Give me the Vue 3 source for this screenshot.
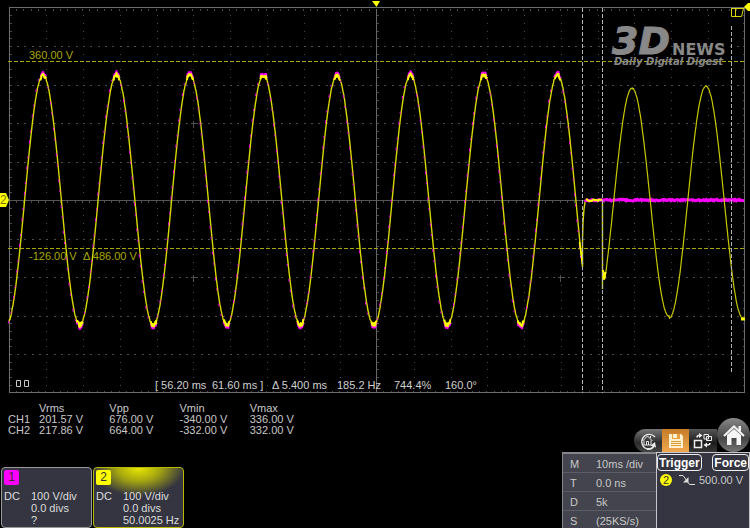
<script setup>
const LEFT = 9
const RIGHT = 744
const TOP = 8
const BOTTOM = 392
const MID_X = 376
const MID_Y = 200
const DIV_X = 36.75
const DIV_Y = 38.5
const PERIOD = 73.5

const range = (from, to) => Array.from({ length: to - from + 1 }, (_, i) => from + i)

// Graticule: dotted division lines, ticks on the frame and on both axes
const columns = range(-9, 9).filter((n) => n).map((n) => Math.round(MID_X + n * DIV_X))
const rows = range(-4, 4).filter((n) => n).map((n) => Math.round(MID_Y + n * DIV_Y))
const minorX = range(-49, 49).map((n) => Math.round(MID_X + (n * DIV_X) / 5))
const minorY = range(-24, 24).map((n) => Math.round(MID_Y + (n * DIV_Y) / 5))

const dots = [
  ...columns.map((x) => minorY.map((y) => `M${x} ${y}h1`).join('')),
  ...rows.map((y) => minorX.map((x) => `M${x} ${y}h2`).join('')),
].join('')
const ticks = [
  ...minorX.map((x) => `M${x} ${TOP}v2M${x} ${BOTTOM}v-2M${x} ${MID_Y - 1}v3`),
  ...minorY.map((y) => `M${LEFT} ${y}h2M${RIGHT} ${y}h-2M${MID_X - 1} ${y}h3`),
].join('')
const crosses = [193, 560]
  .flatMap((x) => [123, 277].map((y) => `M${x - 3} ${y}h7M${x} ${y - 3}v7`))
  .join('')

// Repeatable pseudo-random value in -1..1
const noise = (n) => {
  const v = Math.sin(n * 12.9898) * 43758.5453
  return (v - Math.floor(v)) * 2 - 1
}

const trace = (from, to, step, fn) => {
  let d = ''
  for (let x = from; x <= to; x += step) {
    d += `${d ? 'L' : 'M'}${x.toFixed(1)} ${fn(x).toFixed(1)}`
  }
  return d
}
const phase = (x, peak) => Math.cos(((x - peak) * 2 * Math.PI) / PERIOD)
const mains = (amp, jitter) => (x) => {
  const c = phase(x, 43)
  return MID_Y - amp * c + noise(x) * jitter * c * c
}
const inverter = (x) => 202 - (x > 669 ? 116 : 114) * phase(x, x > 669 ? 706 : 632) + noise(x) * 0.5

const crestsOf = (amp) =>
  range(0, 14)
    .map((n) => 43 + (n * PERIOD) / 2)
    .map((x) => trace(x - 3, x + 3, 0.5, mains(amp, 2)))
    .join('')

const yellowMain =
  trace(LEFT, 582.5, 0.5, mains(125, 1)) +
  'L582.5 240L583 222L584 209L585 202L587 200H602.5V289'
const yellowTail = 'M603 270L604 279' + trace(605, 743, 0.5, inverter).replace('M', 'L')
const magentaMain = trace(LEFT, 582, 0.5, mains(127, 1))
const yellowCrests = crestsOf(125)
const magentaCrests = crestsOf(127)
const magentaFlat = trace(585, 744, 1, (x) => MID_Y + noise(x) * 0.9)
const yellowFlat = trace(586, 602, 1, (x) => MID_Y + noise(x + 5) * 1.2)

const measureHeads = ['Vrms', 'Vpp', 'Vmin', 'Vmax']
const measures = [
  { name: 'CH1', values: ['201.57 V', '676.00 V', '-340.00 V', '336.00 V'] },
  { name: 'CH2', values: ['217.86 V', '664.00 V', '-332.00 V', '332.00 V'] },
]
const channels = [
  { id: 1, coupling: 'DC', lines: ['100 V/div', '0.0 divs', '?'] },
  { id: 2, coupling: 'DC', lines: ['100 V/div', '0.0 divs', '50.0025 Hz'] },
]
const timebase = [
  ['M', '10ms /div'],
  ['T', '0.0 ns'],
  ['D', '5k'],
  ['S', '(25KS/s)'],
]
</script>

<template>
  <main class="scope">
    <svg class="screen" viewBox="0 0 750 396" role="img" aria-label="Waveforms">
      <g shape-rendering="crispEdges" fill="none" transform="translate(0.5 0.5)">
        <path :d="dots" stroke="#4c4c4c" />
        <path :d="ticks" stroke="#4a4a4a" />
        <path :d="crosses" stroke="#505050" />
        <path d="M9 200H744" stroke="#555" />
        <path d="M376 8V392" stroke="#666" />
        <path d="M9 7H744V392H9Z" stroke="#6c6c6c" />
      </g>

      <g shape-rendering="crispEdges" fill="none" stroke="#a8a800" stroke-dasharray="4 2">
        <path d="M8 61.5H744" />
        <path d="M8 248.5H744" />
      </g>

      <g class="watermark">
        <text x="612" y="54" class="mark">3D</text>
        <text x="672" y="55" class="news">NEWS</text>
        <text x="614" y="65" class="motto">Daily Digital Digest</text>
      </g>

      <g fill="none" stroke-linejoin="round">
        <path :d="yellowMain" stroke="#d8d800" stroke-width="1.4" />
        <path :d="magentaMain" stroke="#f0f" stroke-dasharray="3 8 2 13" transform="translate(-0.8 0)" />
        <path :d="magentaCrests" stroke="#f0f" stroke-width="2" />
        <path :d="yellowCrests" stroke="#ff0" stroke-width="2" />
        <path d="M579.5 242L582.5 264" stroke="#ff0" stroke-width="1.5" />
        <path :d="magentaFlat" stroke="#f0f" stroke-width="3" />
        <path :d="yellowFlat" stroke="#ff0" stroke-width="2" />
        <path :d="yellowTail" stroke="#c8c800" stroke-width="1.2" />
        <path d="M603 270L604 279L605.5 272" stroke="#ff0" stroke-width="2" />
        <path d="M741 319h4" stroke="#ff0" stroke-width="3" />
      </g>
      <g shape-rendering="crispEdges" fill="none" stroke="#b4b4b4">
        <path d="M582.5 8V393M602.5 8V393" stroke-dasharray="4 2" />
        <path d="M731.5 26V374" stroke-dasharray="4 2" />
      </g>

      <path d="M372 1H380L376.5 7Z" fill="#ff0" />
      <path d="M744 7L748 3H750V11H748Z" fill="#ff0" />
      <path d="M731.5 8.5V16.5H741.5L743.5 8.5M735.5 8.5V16M731 8.5H744" fill="none" stroke="#d8d800" />
      <path d="M0 193H6L9 200L6 207H0Z" fill="#ff0" />
      <text x="0" y="204" class="marker">2</text>

      <g class="level">
        <text x="29" y="59">360.00 V</text>
        <text x="29" y="260">-126.00 V</text>
        <text x="83" y="260">Δ 486.00 V</text>
      </g>
      <path d="M16.5 380.5h4v6h-4zM24.5 380.5h4v6h-4z" fill="none" stroke="#c8c8c8" />
      <g class="cursor-readout">
        <text x="155" y="389">[ 56.20 ms</text>
        <text x="212" y="389">61.60 ms ]</text>
        <text x="272" y="389">Δ 5.400 ms</text>
        <text x="337" y="389">185.2 Hz</text>
        <text x="394" y="389">744.4%</text>
        <text x="445" y="389">160.0°</text>
      </g>
    </svg>

    <section class="lower">
      <div class="left">
        <table class="measure">
          <thead>
            <tr>
              <td></td>
              <th v-for="h in measureHeads" :key="h" scope="col">{{ h }}</th>
            </tr>
          </thead>
          <tbody>
            <tr v-for="m in measures" :key="m.name">
              <th scope="row">{{ m.name }}</th>
              <td v-for="v in m.values" :key="v">{{ v }}</td>
            </tr>
          </tbody>
        </table>

        <div class="channels">
          <article v-for="c in channels" :key="c.id" class="channel" :class="`channel-${c.id}`">
            <span class="badge">{{ c.id }}</span>
            <div class="settings">
              <span>{{ c.coupling }}</span>
              <div>
                <div v-for="l in c.lines" :key="l">{{ l }}</div>
              </div>
            </div>
          </article>
        </div>
      </div>

      <div class="right">
        <nav class="toolbar">
          <button type="button" class="tool first" aria-label="Auto set">
            <svg width="20" height="20" viewBox="0 0 20 20" fill="none" stroke="#e8e8e8">
              <path d="M17 6A7.5 7.5 0 1 0 9 18" stroke-width="1.3" />
              <path d="M9 18C13 18.5 15 17 16 14.5" stroke-width="2" />
              <path d="M12.5 14.5L17 11L18 16.5Z" fill="#e8e8e8" stroke="none" />
              <path d="M4.5 10L9.5 5L14.5 10M6 9.5V14H13V9.5M8.5 14V10.5H10.5V14M12.5 7V5" />
            </svg>
          </button>
          <button type="button" class="tool save" aria-label="Save">
            <svg width="16" height="16" viewBox="0 0 16 16">
              <path d="M1 1H13L15 3V15H1Z" fill="#fff0d0" />
              <path d="M4 1H12V6H4Z" fill="#e8a040" />
              <path d="M5 1H9V5H5Z" fill="#fff0d0" />
              <path d="M3 8.5H13M3 10.5H13M3 12.5H13" stroke="#e09a38" />
            </svg>
          </button>
          <button type="button" class="tool" aria-label="Arrange">
            <svg width="20" height="16" viewBox="0 0 20 16" fill="none" stroke="#eee">
              <path d="M1.5 7.5H8.5V14.5H1.5Z" stroke-width="1.5" />
              <path d="M11 1.5H15.5V6H11ZM13.5 3.5H18.5V7.5H13.5Z" />
              <path d="M4 4.5C4 2.5 5 2.5 6 2.5M17 10C17 12 15 12 14 12" stroke-width="1.5" />
              <path d="M6 0L9.5 2.5L6 5ZM14 9.5L10.5 12L14 14.5Z" fill="#eee" stroke="none" />
            </svg>
          </button>
          <button type="button" class="home" aria-label="Home">
            <svg width="24" height="24" viewBox="0 0 24 24">
              <path d="M16.5 3H19V8H16.5Z" fill="#f4f4f4" />
              <path d="M5 12L12 6L19 12V22H14.5V15H9.5V22H5Z" fill="#f4f4f4" />
              <path d="M2 13L12 3.5L22 13" fill="none" stroke="#f4f4f4" stroke-width="2" />
            </svg>
          </button>
        </nav>

        <div class="panels">
          <dl class="timebase">
            <div v-for="[k, v] in timebase" :key="k">
              <dt>{{ k }}</dt>
              <dd>{{ v }}</dd>
            </div>
          </dl>
          <div class="trigger">
            <div class="trigger-buttons">
              <button type="button">Trigger</button>
              <button type="button">Force</button>
            </div>
            <div class="trigger-level">
              <span class="source">2</span>
              <svg width="16" height="12" viewBox="0 0 16 12" fill="none" stroke="#ddd">
                <path d="M0 1.5H4L10.5 10.5H16" />
                <path d="M9.5 3V8.5H4Z" fill="#ddd" stroke="none" />
              </svg>
              <span>500.00 V</span>
            </div>
          </div>
        </div>
      </div>
    </section>
  </main>
</template>

<style>
body {
  background: #000;
}
</style>

<style scoped>
.scope {
  display: flex;
  flex-direction: column;
  min-height: 100vh;
  background: #000;
  color: #c8c8c8;
  font: 11px/12px "Liberation Sans", Arial, sans-serif;
}
.screen {
  display: block;
  width: 100%;
}
.watermark {
  fill: #888;
  font-family: "DejaVu Sans", sans-serif;
  font-weight: bold;
}
.mark {
  font-size: 38px;
  font-style: italic;
  stroke: #888;
  stroke-width: 1px;
}
.news {
  font-size: 16px;
}
.motto {
  font-size: 10px;
  font-style: italic;
}
.marker {
  font-size: 12px;
  fill: #777700;
}
.level {
  fill: #a8a800;
}
.cursor-readout {
  fill: #d0d0d0;
}
.lower {
  display: flex;
  flex: 1;
  justify-content: space-between;
}
.left {
  display: flex;
  flex-direction: column;
  justify-content: space-between;
  padding-top: 7px;
}
.measure {
  margin-left: 8px;
  border-collapse: collapse;
  table-layout: fixed;
  width: 312px;
  line-height: 11px;
}
.measure th,
.measure td {
  width: 70px;
  padding: 0;
  font-weight: normal;
  text-align: left;
}
.measure tr > :first-child {
  width: 31px;
}
.channels {
  display: flex;
  gap: 1px;
  padding-left: 1px;
}
.channel {
  box-sizing: border-box;
  width: 91px;
  padding: 2px 2px 1px;
  border: 1px solid #999;
  border-radius: 4px;
  background: #343540;
  color: #ddd;
}
.channel-2 {
  border-color: #b8b800;
  background: radial-gradient(ellipse 46px 28px at 50% 0, #e8e800, #a8a810 45%, transparent) #343540;
}
.badge {
  display: block;
  width: 15px;
  height: 15px;
  border-radius: 2px;
  background: #f0f;
  color: #333;
  font-size: 12px;
  line-height: 15px;
  text-align: center;
}
.channel-2 .badge {
  background: #ff0;
}
.settings {
  display: grid;
  grid-template-columns: 27px 1fr;
  padding-top: 5px;
  white-space: nowrap;
}
.right {
  display: flex;
  flex-direction: column;
  justify-content: flex-end;
  width: 188px;
}
button {
  padding: 0;
  border: 0;
  background: none;
  color: inherit;
  font: inherit;
}
.toolbar {
  display: flex;
  align-items: flex-end;
  justify-content: flex-end;
}
.tool {
  display: flex;
  align-items: center;
  justify-content: center;
  width: 28px;
  height: 23px;
  background: linear-gradient(#555, #1c1c1c 60%, #333);
}
.first {
  border-radius: 12px 0 0 12px;
  background: linear-gradient(#777, #2c2c2c 60%, #444);
}
.save {
  width: 27px;
  background: linear-gradient(#c47c28, #f0a850);
}
.home {
  display: flex;
  align-items: center;
  justify-content: center;
  width: 33px;
  height: 34px;
  border-radius: 50%;
  background: linear-gradient(#888, #444 60%, #777);
}
.panels {
  display: grid;
  grid-template-columns: 1fr 1fr;
  height: 76px;
}
.timebase {
  margin: 0;
  border: solid #85858c;
  border-width: 2px 0 0 1px;
  background: #43444e;
  overflow: hidden;
}
.timebase div {
  display: grid;
  grid-template-columns: 26px 1fr;
  box-sizing: border-box;
  height: 19px;
  padding: 4px 0 2px 7px;
  border-bottom: 1px solid #5c5d66;
}
.timebase dd {
  margin: 0;
}
.trigger {
  border: solid #c8c8cc;
  border-width: 1px 1px 0 1px;
  background: #343540;
}
.trigger-buttons {
  display: flex;
  justify-content: space-between;
  padding-top: 1px;
}
.trigger-buttons button {
  height: 17px;
  padding: 0 1px;
  border: 1px solid #eee;
  border-radius: 4px;
  color: #fff;
  font-size: 12px;
  font-weight: bold;
}
.trigger-level {
  display: flex;
  align-items: center;
  gap: 4px;
  padding: 3px 0 0 3px;
}
.source {
  width: 12px;
  margin-right: 3px;
  border-radius: 50%;
  background: #ff0;
  color: #333;
  text-align: center;
}
</style>
